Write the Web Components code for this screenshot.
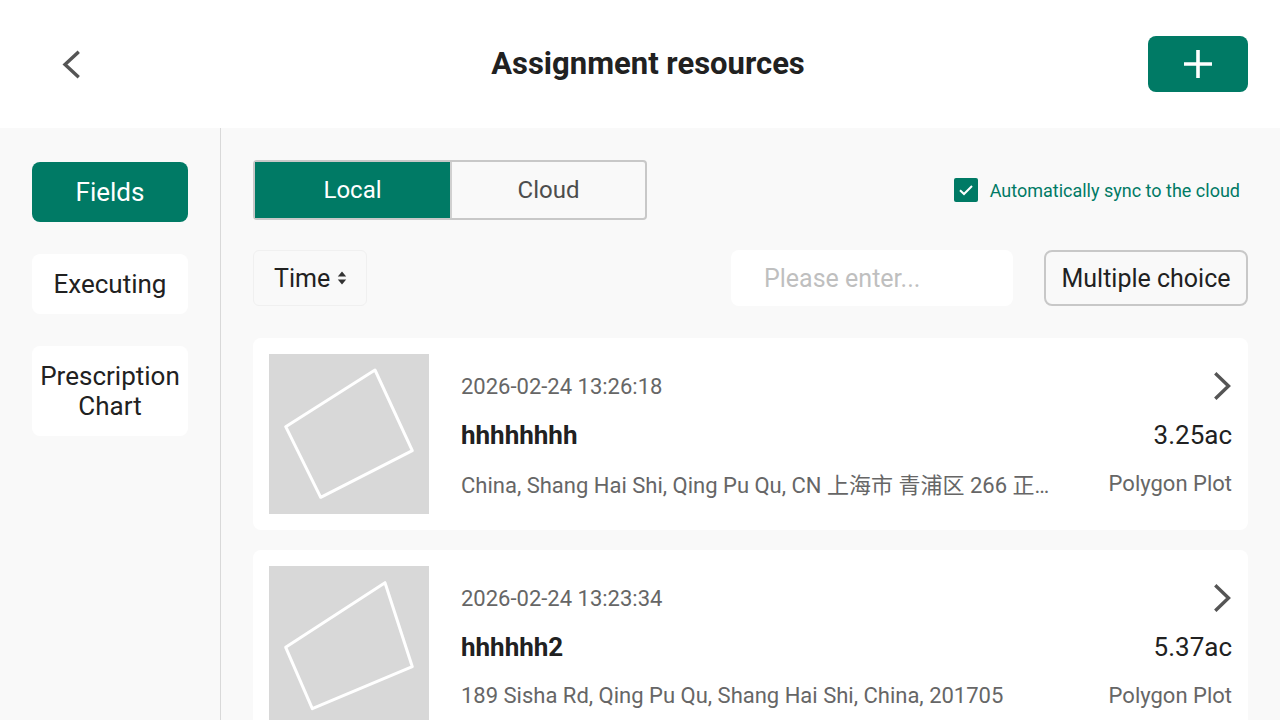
<!DOCTYPE html>
<html lang="en">
<head>
<meta charset="utf-8">
<title>Assignment resources</title>
<style>
  html, body {
    margin: 0;
    height: 100%;
    overflow: hidden;
    background: #f9f9f9;
    color: #212121;
    font-family: Roboto, "Noto Sans CJK SC", sans-serif;
  }
</style>
</head>
<body>
<resource-page>
  <top-bar slot="top">Assignment resources</top-bar>
  <side-nav slot="side">
    <nav-item active>Fields</nav-item>
    <nav-item>Executing</nav-item>
    <nav-item>Prescription<br>Chart</nav-item>
  </side-nav>
  <seg-switch></seg-switch>
  <filter-bar></filter-bar>
  <field-card date="2026-02-24 13:26:18" name="hhhhhhhh" area="3.25ac" kind="Polygon Plot"
    address="China, Shang Hai Shi, Qing Pu Qu, CN 上海市 青浦区 266 正北门外大街一号楼" points="106,16 143.3,96.7 51.7,143.3 16.7,72.7"></field-card>
  <field-card date="2026-02-24 13:23:34" name="hhhhhh2" area="5.37ac" kind="Polygon Plot"
    address="189 Sisha Rd, Qing Pu Qu, Shang Hai Shi, China, 201705" points="116,16.7 143.3,100.7 43.3,142.7 16.7,81.3"></field-card>
</resource-page>

<script>
customElements.define('resource-page', class extends HTMLElement {
  constructor () {
    super()
    this.attachShadow({ mode: 'open' }).innerHTML = `
      <style>
        :host { display: flex; flex-direction: column; height: 720px; overflow: hidden; }
        .body { display: flex; flex: 1; min-height: 0; }
        .content {
          flex: 1;
          min-width: 0;
          padding: 32px 32px 0 32px;
          display: flex;
          flex-direction: column;
        }
        ::slotted(field-card) { margin-bottom: 20px; flex: none; }
      </style>
      <slot name="top"></slot>
      <div class="body">
        <slot name="side"></slot>
        <div class="content"><slot></slot></div>
      </div>`
  }
})

customElements.define('top-bar', class extends HTMLElement {
  constructor () {
    super()
    this.attachShadow({ mode: 'open' }).innerHTML = `
      <style>
        :host {
          display: flex;
          align-items: center;
          justify-content: space-between;
          height: 128px;
          flex: none;
          padding: 0 32px;
          box-sizing: border-box;
          background: #fff;
        }
        .back { width: 116px; display: flex; padding-left: 28px; box-sizing: border-box; }
        h1 { margin: 0; font-size: 31px; line-height: 40px; font-weight: 700; color: #212121; }
        .add {
          width: 100px;
          height: 56px;
          border-radius: 8px;
          background: #007a65;
          display: flex;
          align-items: center;
          justify-content: center;
        }
        svg { display: block; }
      </style>
      <div class="back">
        <svg width="24" height="32" viewBox="0 0 24 32"><path d="M17.5 5 L5 16.5 L17.5 28" transform="translate(0 0)" fill="none" stroke="#555" stroke-width="3.4" stroke-linecap="square" stroke-linejoin="miter" /></svg>
      </div>
      <h1><slot></slot></h1>
      <div class="add">
        <svg width="28" height="28" viewBox="0 0 28 28"><path d="M0 14H28M14 0V28" fill="none" stroke="#fff" stroke-width="3.6"/></svg>
      </div>`
  }
})

customElements.define('side-nav', class extends HTMLElement {
  constructor () {
    super()
    this.attachShadow({ mode: 'open' }).innerHTML = `
      <style>
        :host {
          display: flex;
          flex-direction: column;
          gap: 32px;
          flex: none;
          width: 221px;
          box-sizing: border-box;
          padding: 34px 32px 0 32px;
          border-right: 1px solid #d9d9d9;
        }
      </style>
      <slot></slot>`
  }
})

customElements.define('nav-item', class extends HTMLElement {
  constructor () {
    super()
    this.attachShadow({ mode: 'open' }).innerHTML = `
      <style>
        :host {
          display: flex;
          align-items: center;
          justify-content: center;
          text-align: center;
          min-height: 60px;
          padding: 15px 0;
          box-sizing: border-box;
          border-radius: 8px;
          background: #fff;
          color: #212121;
          font-size: 26px;
          line-height: 30px;
        }
        :host([active]) { background: #007a65; color: #fff; }
      </style>
      <span><slot></slot></span>`
  }
})

customElements.define('seg-switch', class extends HTMLElement {
  constructor () {
    super()
    this.attachShadow({ mode: 'open' }).innerHTML = `
      <style>
        :host {
          display: flex;
          align-items: center;
          justify-content: space-between;
          height: 60px;
          flex: none;
          padding-right: 8px;
        }
        .seg {
          display: flex;
          width: 394px;
          height: 60px;
          box-sizing: border-box;
          border: 2px solid #c8c8c8;
          border-radius: 4px;
          font-size: 24px;
          color: #4d4d4d;
        }
        .seg div { display: flex; align-items: center; justify-content: center; }
        .on { width: 195px; background: #007a65; color: #fff; }
        .off { flex: 1; border-left: 2px solid #d0d0d0; }
        .sync { display: flex; align-items: center; gap: 12px; font-size: 18px; color: #007a65; }
        .box {
          width: 24px;
          height: 24px;
          border-radius: 2px;
          background: #007a65;
          display: flex;
          align-items: center;
          justify-content: center;
        }
      </style>
      <div class="seg"><div class="on">Local</div><div class="off">Cloud</div></div>
      <div class="sync">
        <div class="box"><svg width="16" height="16" viewBox="0 0 16 16"><path d="M2 8.2 L6 12 L14 4" fill="none" stroke="#fff" stroke-width="2"/></svg></div>
        <span>Automatically sync to the cloud</span>
      </div>`
  }
})

customElements.define('filter-bar', class extends HTMLElement {
  constructor () {
    super()
    this.attachShadow({ mode: 'open' }).innerHTML = `
      <style>
        :host {
          display: flex;
          align-items: center;
          height: 56px;
          flex: none;
          margin: 30px 0 32px;
          font-size: 25px;
          color: #212121;
        }
        .time {
          display: flex;
          align-items: center;
          gap: 7px;
          width: 114px;
          height: 56px;
          box-sizing: border-box;
          padding-left: 20px;
          border: 1px solid #f0f0f0;
          border-radius: 6px;
        }
        .search {
          margin-left: auto;
          width: 282px;
          height: 56px;
          box-sizing: border-box;
          padding-left: 33px;
          display: flex;
          align-items: center;
          background: #fff;
          border-radius: 8px;
          color: #bfbfbf;
        }
        .multi {
          margin-left: 31px;
          width: 204px;
          height: 56px;
          box-sizing: border-box;
          border: 2px solid #c8c8c8;
          border-radius: 8px;
          display: flex;
          align-items: center;
          justify-content: center;
        }
      </style>
      <div class="time">
        <span>Time</span>
        <svg width="10" height="14" viewBox="0 0 10 14"><path d="M5 0.5L9.2 5.5H0.8ZM5 13.5L0.8 8.5H9.2Z" fill="#333"/></svg>
      </div>
      <div class="search">Please enter...</div>
      <div class="multi">Multiple choice</div>`
  }
})

/**
 * One saved field: plot thumbnail, date, name, address, area and plot type.
 */
customElements.define('field-card', class extends HTMLElement {
  constructor () {
    super()
    this.attachShadow({ mode: 'open' }).innerHTML = `
      <style>
        :host {
          display: flex;
          gap: 32px;
          height: 192px;
          box-sizing: border-box;
          padding: 16px;
          background: #fff;
          border-radius: 8px;
        }
        .thumb { width: 160px; height: 160px; flex: none; background: #d8d8d8; display: block; }
        .info { flex: 1; min-width: 0; display: flex; flex-direction: column; justify-content: space-between; padding: 16px 0 15px; box-sizing: border-box; height: 160px; }
        .row { display: flex; align-items: center; justify-content: space-between; height: 32px; }
        .date, .addr, .kind { font-size: 22px; color: #666; }
        .addr { width: 600px; white-space: nowrap; overflow: hidden; text-overflow: ellipsis; }
        .name { font-size: 26px; font-weight: 700; color: #212121; }
        .area { font-size: 26px; color: #212121; }
      </style>
      <svg class="thumb" viewBox="0 0 160 160"><polygon fill="none" stroke="#fff" stroke-width="3" stroke-linejoin="round" /></svg>
      <div class="info">
        <div class="row">
          <span class="date"></span>
          <svg width="18" height="28" viewBox="0 0 18 28"><path d="M2.5 2.5 L14.5 14 L2.5 25.5" fill="none" stroke="#555" stroke-width="3.4" stroke-linecap="square"/></svg>
        </div>
        <div class="row"><span class="name"></span><span class="area"></span></div>
        <div class="row"><span class="addr"></span><span class="kind"></span></div>
      </div>`
  }

  /**
   * Copies the attributes into the shadow markup.
   */
  connectedCallback () {
    const root = this.shadowRoot
    for (const key of ['date', 'name', 'area', 'kind']) {
      root.querySelector('.' + key).textContent = this.getAttribute(key)
    }
    root.querySelector('.addr').textContent = this.getAttribute('address')
    root.querySelector('polygon').setAttribute('points', this.getAttribute('points'))
  }
})
</script>
</body>
</html>
